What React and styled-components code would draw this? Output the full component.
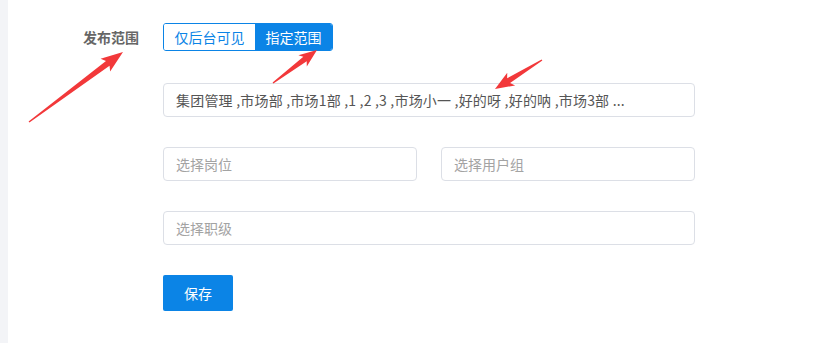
import React from "react";
import styled, { createGlobalStyle } from "styled-components";

const Global = createGlobalStyle`
  html, body { margin: 0; padding: 0; background: #fff; }
  body { font-family: "Noto Sans CJK SC", "Noto Sans", sans-serif; font-size: 14px; }
  * { box-sizing: border-box; }
`;

const Page = styled.div`
  position: relative;
  display: flex;
  width: 837px;
  height: 343px;
  overflow: hidden;
`;

const SideStrip = styled.div`
  width: 8px;
  flex: none;
  background: #f3f4f7;
`;

const Content = styled.div`
  flex: 1;
  padding-top: 23px;
  display: flex;
  flex-direction: column;
`;

const Field = styled.div`
  display: grid;
  grid-template-columns: 131px 532px;
  column-gap: 24px;
  align-items: center;
  margin-bottom: ${(p) => p.$gap ?? 30}px;
`;

const Label = styled.div`
  text-align: right;
  color: #666;
  font-weight: 600;
  font-size: 14px;
  line-height: 20px;
`;

const Toggle = styled.div`
  display: inline-flex;
  justify-self: start;
  height: 28px;
  border: 1px solid #0b84e6;
  border-radius: 3px;
  overflow: hidden;
`;

const ToggleItem = styled.div`
  display: flex;
  align-items: center;
  padding: 0 10.5px;
  font-size: 14px;
  color: ${(p) => (p.$active ? "#fff" : "#0b84e6")};
  background: ${(p) => (p.$active ? "#0b84e6" : "#fff")};
`;

const Row = styled.div`
  display: flex;
  gap: 24px;
`;

const Input = styled.div`
  flex: 1;
  height: 34px;
  border: 1px solid #dcdfe6;
  border-radius: 4px;
  padding: 0 12px;
  display: flex;
  align-items: center;
  font-size: 14px;
  letter-spacing: ${(p) => (p.$placeholder ? "0" : "0.2px")};
  color: ${(p) => (p.$placeholder ? "#a3a3a3" : "#555")};
  white-space: nowrap;
  overflow: hidden;
`;

const SaveButton = styled.button`
  justify-self: start;
  width: 70px;
  height: 36px;
  border: none;
  border-radius: 2px;
  background: #0b84e6;
  color: #fff;
  font-family: inherit;
  font-size: 14px;
  padding: 0;
`;

const Overlay = styled.svg`
  position: absolute;
  left: 0;
  top: 0;
  pointer-events: none;
`;

function arrowPoints(T, P, L, W, w0, w1) {
  const dx = P[0] - T[0];
  const dy = P[1] - T[1];
  const len = Math.hypot(dx, dy);
  const d = [dx / len, dy / len];
  const n = [-d[1], d[0]];
  const B = [P[0] - d[0] * L, P[1] - d[1] * L];
  const Wb = [B[0] - d[0] * 3, B[1] - d[1] * 3];
  const pt = (base, k) => `${base[0] + n[0] * k},${base[1] + n[1] * k}`;
  return [
    pt(T, w0),
    pt(B, w1),
    pt(Wb, W),
    `${P[0]},${P[1]}`,
    pt(Wb, -W),
    pt(B, -w1),
    pt(T, -w0),
  ].join(" ");
}

const arrows = [
  { T: [29, 122], P: [123, 52], L: 19, W: 8, w0: 0.7, w1: 3 },
  { T: [273, 83], P: [317, 50], L: 15, W: 7, w0: 0.7, w1: 2.8 },
  { T: [542, 60], P: [495, 89], L: 16, W: 7.5, w0: 0.7, w1: 2.8 },
];

export default function App() {
  return (
    <>
      <Global />
      <Page>
        <SideStrip />
        <Content>
          <Field $gap={32}>
            <Label>发布范围</Label>
            <Toggle>
              <ToggleItem>仅后台可见</ToggleItem>
              <ToggleItem $active>指定范围</ToggleItem>
            </Toggle>
          </Field>
          <Field>
            <span />
            <Input>集团管理 ,市场部 ,市场1部 ,1 ,2 ,3 ,市场小一 ,好的呀 ,好的呐 ,市场3部 ...</Input>
          </Field>
          <Field>
            <span />
            <Row>
              <Input $placeholder>选择岗位</Input>
              <Input $placeholder>选择用户组</Input>
            </Row>
          </Field>
          <Field>
            <span />
            <Input $placeholder>选择职级</Input>
          </Field>
          <Field>
            <span />
            <SaveButton>保存</SaveButton>
          </Field>
        </Content>
        <Overlay width="837" height="343" viewBox="0 0 837 343">
          {arrows.map((a, i) => (
            <polygon key={i} points={arrowPoints(a.T, a.P, a.L, a.W, a.w0, a.w1)} fill="#f2383a" />
          ))}
        </Overlay>
      </Page>
    </>
  );
}
